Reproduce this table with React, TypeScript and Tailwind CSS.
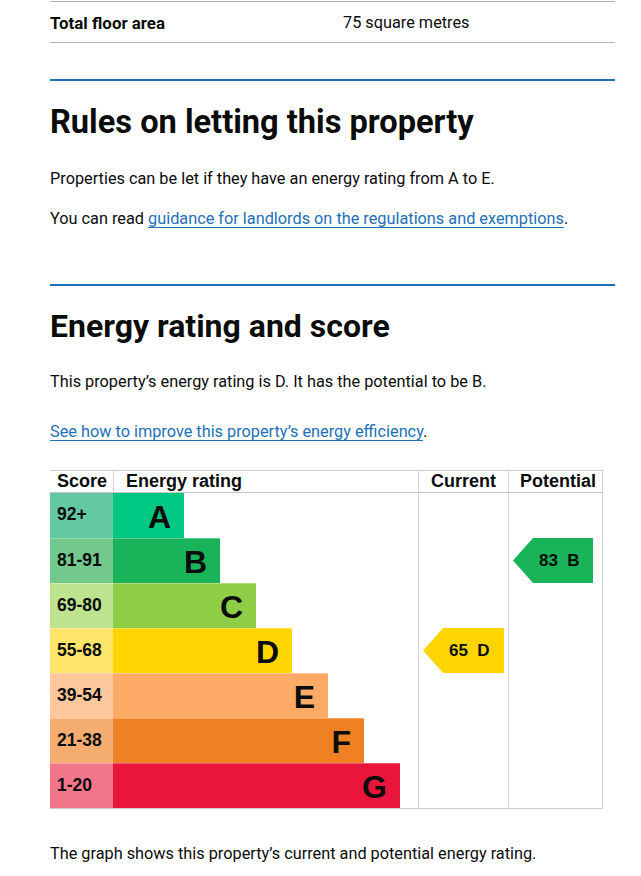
import React from "react";

type Row = {
  score: string;
  letter: string;
  scoreBg: string;
  bar: string;
  w: string;
};

const rows: Row[] = [
  { score: "92+", letter: "A", scoreBg: "bg-[#64c8a3]", bar: "bg-[#00c781]", w: "w-[71px]" },
  { score: "81-91", letter: "B", scoreBg: "bg-[#73c98d]", bar: "bg-[#19b459]", w: "w-[107px]" },
  { score: "69-80", letter: "C", scoreBg: "bg-[#bde38f]", bar: "bg-[#8dce46]", w: "w-[143px]" },
  { score: "55-68", letter: "D", scoreBg: "bg-[#ffe46a]", bar: "bg-[#ffd500]", w: "w-[179px]" },
  { score: "39-54", letter: "E", scoreBg: "bg-[#fec79c]", bar: "bg-[#fcaa65]", w: "w-[215px]" },
  { score: "21-38", letter: "F", scoreBg: "bg-[#f5ac71]", bar: "bg-[#ef8023]", w: "w-[251px]" },
  { score: "1-20", letter: "G", scoreBg: "bg-[#f2758a]", bar: "bg-[#e9153b]", w: "w-[287px]" },
];

function Arrow({ value, letter, color, width }: { value: string; letter: string; color: string; width: string }) {
  return (
    <div
      className={`${color} ${width} h-full flex items-center pl-[26px] text-[17px] font-bold leading-none whitespace-pre text-[#0b0c0c] [clip-path:polygon(20px_0,100%_0,100%_100%,20px_100%,0_50%)]`}
    >
      {value + "  " + letter}
    </div>
  );
}

function EnergyGraph() {
  return (
    <div className="w-[553px] border-t border-b border-[#cccccc] [font-family:'Liberation_Sans',Arial,sans-serif] text-[#0b0c0c]">
      <div className="grid grid-cols-[63px_305px_90px_95px] h-[22px] border-b border-[#c4c4c4] text-[18px] font-bold leading-[20px]">
        <div className="pl-[7px]">Score</div>
        <div className="pl-[12px] border-l border-[#d6d6d6]">Energy rating</div>
        <div className="text-center border-l border-[#d6d6d6]">Current</div>
        <div className="text-center border-l border-r border-[#d6d6d6] pl-[5px]">Potential</div>
      </div>
      <div className="grid grid-cols-[63px_305px_90px_95px] grid-rows-[repeat(7,45px)]">
        {rows.map((r, i) => (
          <React.Fragment key={r.letter}>
            <div
              className={`${r.scoreBg} flex items-center pl-[7px] pb-[2px] text-[17.5px] font-bold ${i > 0 ? "border-t border-white/30" : ""}`}
            >
              {r.score}
            </div>
            <div className="flex">
              <div
                className={`${r.bar} ${r.w} h-full flex items-center justify-end pr-[13px] pt-[2px] text-[32px] font-bold leading-none ${i > 0 ? "border-t border-white/30" : ""}`}
              >
                {r.letter}
              </div>
            </div>
            <div className="border-l border-[#d6d6d6] pl-[4px]">
              {r.letter === "D" ? <Arrow value="65" letter="D" color="bg-[#ffd500]" width="w-[81px]" /> : null}
            </div>
            <div className="border-l border-r border-[#d6d6d6] pl-[4px]">
              {r.letter === "B" ? <Arrow value="83" letter="B" color="bg-[#19b459]" width="w-[80px]" /> : null}
            </div>
          </React.Fragment>
        ))}
      </div>
    </div>
  );
}

export default function App() {
  return (
    <div className="w-[641px] min-h-[876px] bg-white text-[#0b0c0c] [font-family:Roboto,'Liberation_Sans',sans-serif]">
      <div className="ml-[50px] w-[565px] pt-px">
        <div className="grid grid-cols-[293px_1fr] h-[42px] items-center border-t border-b border-[#b1b4b6] text-[16.3px] leading-[20px]">
          <div className="font-bold text-[16.9px] pt-px">Total floor area</div>
          <div className="pt-px">75 square metres</div>
        </div>

        <div className="mt-[36px] border-t-2 border-[#1d70b8]" />
        <h2 className="mt-[21px] text-[32.6px] leading-[40px] font-bold">Rules on letting this property</h2>
        <p className="mt-[27px] text-[16.3px] leading-[20px]">
          Properties can be let if they have an energy rating from A to E.
        </p>
        <p className="mt-[20px] text-[16.3px] leading-[20px]">
          You can read{" "}
          <a href="#" className="text-[#1d70b8] underline decoration-1 underline-offset-[3px]">
            guidance for landlords on the regulations and exemptions
          </a>
          .
        </p>

        <div className="mt-[55px] border-t-2 border-[#1d70b8]" />
        <h2 className="mt-[20px] text-[32px] leading-[40px] font-bold">Energy rating and score</h2>
        <p className="mt-[26px] text-[16.3px] leading-[20px]">
          This property’s energy rating is D. It has the potential to be B.
        </p>
        <p className="mt-[30px] text-[16.3px] leading-[20px]">
          <a href="#" className="text-[#1d70b8] underline decoration-1 underline-offset-[3px]">
            See how to improve this property’s energy efficiency
          </a>
          .
        </p>

        <div className="mt-[28px]">
          <EnergyGraph />
        </div>

        <p className="mt-[35px] text-[16.3px] leading-[20px]">
          The graph shows this property’s current and potential energy rating.
        </p>
      </div>
    </div>
  );
}
